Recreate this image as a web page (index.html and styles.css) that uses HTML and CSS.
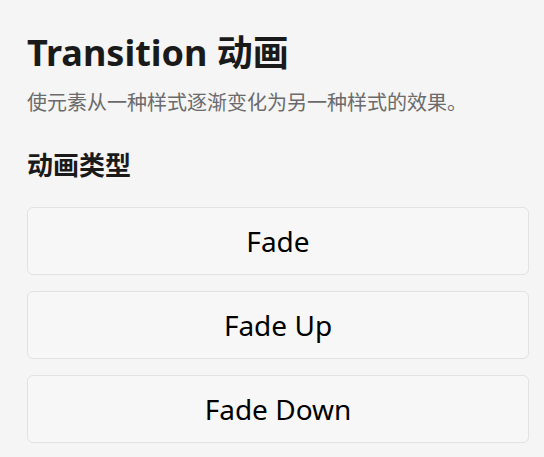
FILE: index.html
```html
<!DOCTYPE html>
<html lang="zh-CN">
<head>
<meta charset="UTF-8" />
<meta name="viewport" content="width=device-width, initial-scale=1.0"/>
<title>Transition 动画</title>
<link rel="stylesheet" href="styles.css">
</head>
<body>

<div class="page">
  <h1 class="title">Transition 动画</h1>
  <p class="desc">使元素从一种样式逐渐变化为另一种样式的效果。</p>

  <h2 class="section-title">动画类型</h2>
  <div class="btn-list">
    <button class="type-btn">Fade</button>
    <button class="type-btn">Fade Up</button>
    <button class="type-btn">Fade Down</button>
  </div>
</div>

</body>
</html>
```

FILE: styles.css
```css
:root {
  --background: #f5f5f5;
  --btn-bg: #f7f7f7;
  --border: #e2e2e2;
  --text: #1a1a1a;
  --muted: #6b6b6b;
}

body {
  margin: 0;
  background: var(--background);
  color: var(--text);
  font-family: "Noto Sans", "Noto Sans CJK SC", sans-serif;
}

.page {
  padding: 29px 15px 14px 27px;
}

.title {
  margin: 0;
  font-size: 36px;
  font-weight: 700;
  line-height: 48px;
}

.desc {
  margin: 11px 0 0;
  font-size: 20px;
  line-height: 30px;
  color: var(--muted);
}

.section-title {
  margin: 29px 0 0;
  font-size: 26px;
  font-weight: 700;
  line-height: 36px;
}

.btn-list {
  display: flex;
  flex-direction: column;
  gap: 16px;
  margin-top: 24px;
}

.type-btn {
  height: 68px;
  background: var(--btn-bg);
  border: 1px solid var(--border);
  border-radius: 6px;
  font-family: inherit;
  font-size: 28px;
  color: #000;
  cursor: pointer;
}
```
